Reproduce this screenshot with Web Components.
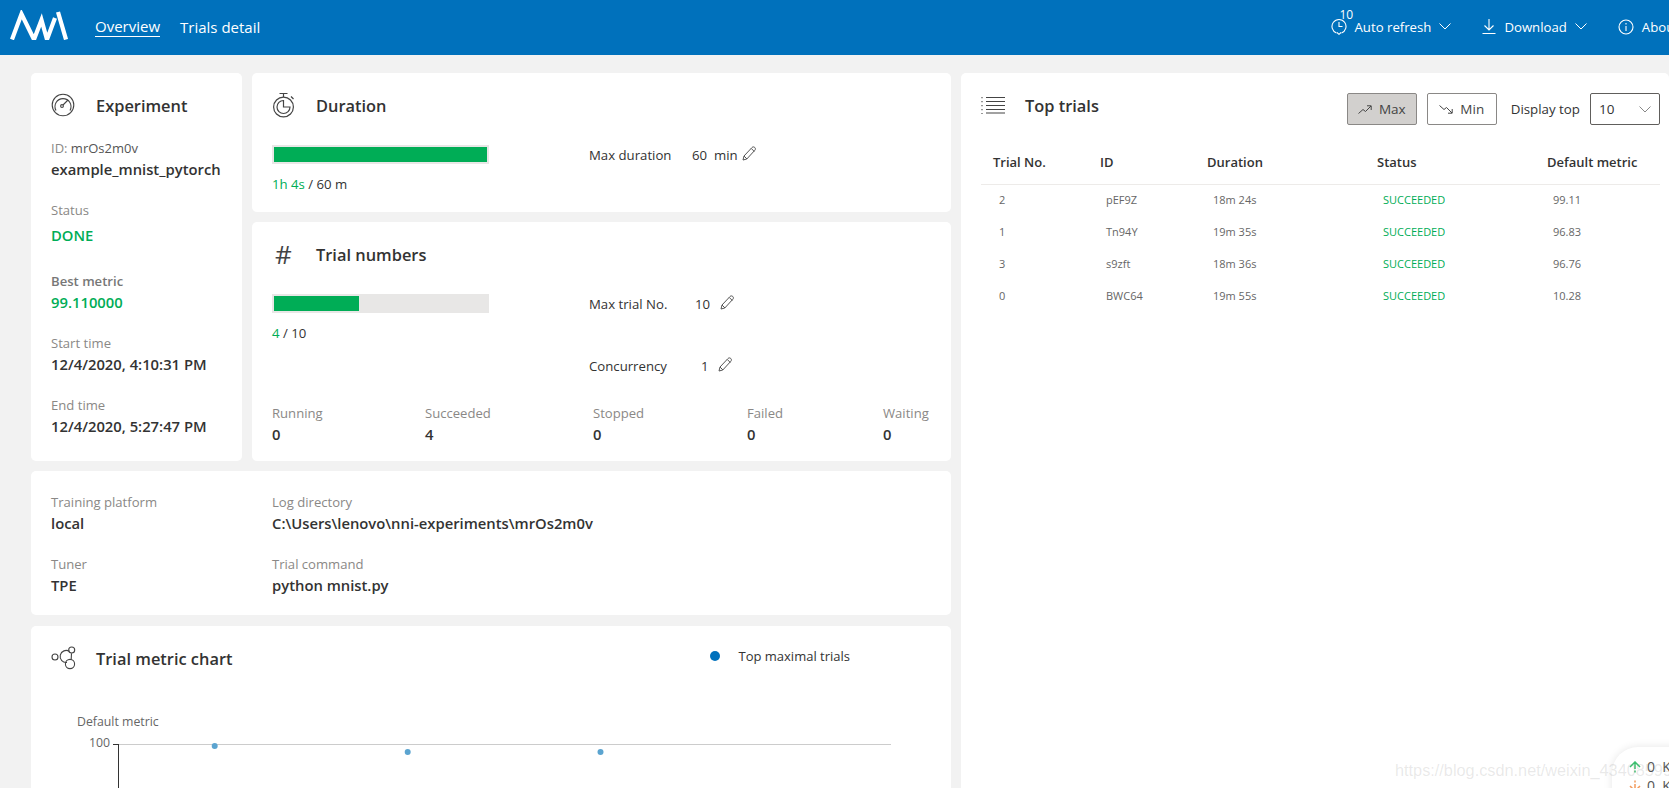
<!DOCTYPE html>
<html>
<head>
<meta charset="utf-8">
<title>NNI</title>
<style>
  html, body { margin: 0; height: 100%; overflow: hidden; }
  body {
    background: #f2f2f2;
    color: #333;
    font-family: "Open Sans", "Noto Sans", sans-serif;
    font-size: 13px;
  }
</style>
</head>
<body>
<nni-app></nni-app>

<script>
const ICONS = {
    gauge: '<svg width="24" height="24" viewBox="0 0 24 24" fill="none" stroke="currentColor" stroke-width="1.1"><circle cx="12" cy="12" r="10.8"/><path d="M5 17.5A8 8 0 1 1 19 17.5"/><circle cx="11" cy="13" r="1.4"/><path d="M12 12l5-5"/></svg>',
    watch: '<svg width="24" height="26" viewBox="0 0 24 26" fill="none" stroke="currentColor" stroke-width="1.2"><path d="M7.500 1.500h8M11.500 1.500v3.500M19 4.500l2.500 2.500"/><circle cx="11.500" cy="15" r="9.900"/><path d="M11.500 8.500a6.500 6.500 0 1 0 6.500 6.500h-6.500z"/></svg>',
    bubbles: '<svg width="26" height="26" viewBox="0 0 26 26" fill="none" stroke="currentColor" stroke-width="1.1"><circle cx="4" cy="12" r="3"/><circle cx="20.700" cy="5" r="3"/><circle cx="19" cy="19" r="4.600"/><path d="M18.500 6.500A6 6 0 1 0 16 17.400M20.500 8.200L20.200 14.500"/></svg>',
    list: '<svg width="24" height="18" viewBox="0 0 24 18" fill="none" stroke="currentColor" stroke-width="1.1"><path d="M5 1.500h19M5 5.500h19M5 9.500h19M5 13.500h19M5 17h19"/><path stroke-dasharray="1.300 2.700" d="M1 1v17"/></svg>',
    pencil: '<svg width="15" height="15" viewBox="0 0 15 15" fill="none" stroke="currentColor" stroke-width="1"><path d="M1 14l1-4 8-8.500c.8-.8 2-.8 2.800 0s.8 2 0 2.800L4.800 13z"/><path d="M2 10l3 3M9.300 2.500l3 3"/></svg>',
    clock: '<svg width="16" height="17" viewBox="0 0 16 17" fill="none" stroke="currentColor" stroke-width="1.1"><path d="M5.500 15A7 7 0 1 1 10.500 15"/><path d="M8 4v4.500h3.500M6 14.500l2 1.800 2-1.800"/></svg>',
    down: '<svg width="14" height="17" viewBox="0 0 14 17" fill="none" stroke="currentColor" stroke-width="1.1"><path d="M7 1v11M2.500 7.500L7 12l4.500-4.500M.5 15.500h13"/></svg>',
    info: '<svg width="16" height="16" viewBox="0 0 16 16" fill="none" stroke="currentColor" stroke-width="1.1"><circle cx="8" cy="8" r="7"/><path d="M8 7v5M8 4v1.400"/></svg>',
    chevron: '<svg width="12" height="7" viewBox="0 0 12 7" fill="none" stroke="currentColor" stroke-width="1"><path d="M.5.500L6 6l5.500-5.500"/></svg>',
    up: '<svg width="14" height="9" viewBox="0 0 14 9" fill="none" stroke="currentColor" stroke-width="1"><path d="M.5 8.500l4.500-4 2.500 2L13 1M9 .8h4.200V5"/></svg>',
    dn: '<svg width="14" height="9" viewBox="0 0 14 9" fill="none" stroke="currentColor" stroke-width="1"><path d="M.5.500l4.500 4 2.500-2L13 8M9 8.200h4.200V4"/></svg>'
};

class NniNav extends HTMLElement {
    constructor() {
        super();
        this.attachShadow({ mode: 'open' });
        this.shadowRoot.innerHTML = `
          <style>
            :host { display: flex; align-items: center; height: 55px; box-sizing: border-box; padding-bottom: 2px; background: #0071bc; color: #fff; font-size: 14px; flex: none; overflow: hidden; }
            .logo { margin: 10px 0 0 10px; width: 58px; height: 30px; flex: none; align-self: flex-start; }
            .tab { margin-left: 27px; font-size: 15px; line-height: 20px; }
            .tab + .tab { margin-left: 20px; }
            .on { border-bottom: 1px solid #fff; }
            .tools { margin-left: auto; display: flex; align-items: center; white-space: nowrap; margin-right: -10px; }
            .tool { display: flex; align-items: center; gap: 8px; margin-left: 31px; position: relative; font-size: 13.200px; }
            .tool .chev { display: flex; }
            .num { position: absolute; left: 9px; top: -10px; font-size: 12px; line-height: 14px; }
          </style>
          <svg class="logo" viewBox="0 0 58 30" fill="none" stroke="#fff" stroke-width="4.200"><path d="M2 29.500L11.500 4 24 29.500 31.500 10 37 29.500 45 8"/><path d="M48 2l8 27.500"/></svg>
          <span class="tab on">Overview</span>
          <span class="tab">Trials detail</span>
          <div class="tools">
            <div class="tool">${ICONS.clock}<span class="num">10</span><span>Auto refresh</span><span class="chev">${ICONS.chevron}</span></div>
            <div class="tool">${ICONS.down}<span>Download</span><span class="chev">${ICONS.chevron}</span></div>
            <div class="tool">${ICONS.info}<span>About</span></div>
          </div>
        `;
    }
}
customElements.define('nni-nav', NniNav);

// white rounded box everything on the page sits in
class NniCard extends HTMLElement {
    constructor() {
        super();
        this.attachShadow({ mode: 'open' });
        this.shadowRoot.innerHTML = `
          <style>
            :host { display: block; background: #fff; border-radius: 5px; box-sizing: border-box; min-width: 0; }
          </style>
          <slot></slot>
        `;
    }
}
customElements.define('nni-card', NniCard);

class NniTitle extends HTMLElement {
    constructor() {
        super();
        const icon = this.getAttribute('icon');
        this.attachShadow({ mode: 'open' });
        this.shadowRoot.innerHTML = `
          <style>
            :host { display: flex; align-items: center; height: 26px; color: #333; }
            .i { width: var(--iw, 44px); flex: none; display: flex; color: #444; }
            .t { font-size: 16.400px; font-weight: 600; white-space: nowrap; }
          </style>
          <span class="i">${icon === 'hash' ? '<span style="font-size:26px;line-height:26px;margin-left:3px">#</span>' : ICONS[icon]}</span>
          <span class="t"><slot></slot></span>
        `;
    }
}
customElements.define('nni-title', NniTitle);

class NniField extends HTMLElement {
    constructor() {
        super();
        this.attachShadow({ mode: 'open' });
        this.shadowRoot.innerHTML = `
          <style>
            :host { display: block; }
            .l { color: #8a8886; font-size: 13.100px; line-height: 18px; white-space: nowrap; }
            .v { font-size: 14.800px; font-weight: 600; line-height: 24px; color: var(--val, #333); white-space: nowrap; margin-top: var(--vm, 0); }
          </style>
          <div class="l">${this.getAttribute('label')}</div>
          <div class="v"><slot></slot></div>
        `;
    }
}
customElements.define('nni-field', NniField);

class NniBar extends HTMLElement {
    constructor() {
        super();
        this.attachShadow({ mode: 'open' });
        this.shadowRoot.innerHTML = `
          <style>
            :host { display: block; width: 217px; height: 19px; box-sizing: border-box; background: #e8e7e6; border: 2px solid #e8e7e6; }
            div { height: 100%; background: #00ad56; width: ${this.getAttribute('pct')}%; }
          </style>
          <div></div>
        `;
    }
}
customElements.define('nni-bar', NniBar);

class NniLimit extends HTMLElement {
    constructor() {
        super();
        this.attachShadow({ mode: 'open' });
        this.shadowRoot.innerHTML = `
          <style>
            :host { display: flex; align-items: center; height: 19px; font-size: 13.200px; white-space: nowrap; color: #333; }
            .l { width: var(--lw, 106px); }
            svg { margin-left: var(--pm, 10px); color: #555; position: relative; top: -1px; }
          </style>
          <span class="l">${this.getAttribute('label')}</span>
          <span><slot></slot></span>
          ${ICONS.pencil}
        `;
    }
}
customElements.define('nni-limit', NniLimit);

class NniExperiment extends HTMLElement {
    constructor() {
        super();
        this.attachShadow({ mode: 'open' });
        this.shadowRoot.innerHTML = `
          <style>
            :host { display: flex; flex-direction: column; padding: 19px 20px; box-sizing: border-box; height: 100%; --iw: 45px; }
            .id { margin-top: 21px; font-size: 13px; line-height: 18px; color: #555; white-space: nowrap; }
            .id span { color: #8a8886; }
            .name { font-size: 14.800px; font-weight: 600; line-height: 24px; white-space: nowrap; }
            .done { --val: #00ad56; }
            .gap { margin-top: 25px; }
            .low { margin-top: 20px; }
          </style>
          <nni-title icon="gauge">Experiment</nni-title>
          <div class="id"><span>ID:</span> mrOs2m0v</div>
          <div class="name">example_mnist_pytorch</div>
          <nni-field class="done" label="Status" style="margin-top:20px;--vm:4px">DONE</nni-field>
          <nni-field class="done gap" label="<b style='font-weight:600;color:#777'>Best metric</b>">99.110000</nni-field>
          <nni-field class="low" label="Start time">12/4/2020, 4:10:31 PM</nni-field>
          <nni-field class="low" label="End time">12/4/2020, 5:27:47 PM</nni-field>
        `;
    }
}
customElements.define('nni-experiment', NniExperiment);

class NniDuration extends HTMLElement {
    constructor() {
        super();
        this.attachShadow({ mode: 'open' });
        this.shadowRoot.innerHTML = `
          <style>
            :host { display: block; padding: 19px 20px; height: 100%; box-sizing: border-box; font-size: 13.200px; }
            .row { display: flex; margin-top: 27px; }
            .left { width: 317px; flex: none; }
            .txt { margin-top: 11px; line-height: 18px; }
            .g { color: #00ad56; }
          </style>
          <nni-title icon="watch">Duration</nni-title>
          <div class="row">
            <div class="left">
              <nni-bar pct="100"></nni-bar>
              <div class="txt"><span class="g">1h 4s</span> / 60 m</div>
            </div>
            <nni-limit label="Max duration" style="--lw:103px;--pm:4px">60&nbsp; min</nni-limit>
          </div>
        `;
    }
}
customElements.define('nni-duration', NniDuration);

class NniTrialNumbers extends HTMLElement {
    constructor() {
        super();
        this.attachShadow({ mode: 'open' });
        this.shadowRoot.innerHTML = `
          <style>
            :host { display: block; padding: 19px 20px; height: 100%; box-sizing: border-box; font-size: 13.200px; }
            .row { display: flex; margin-top: 27px; }
            .left { width: 317px; flex: none; }
            .txt { margin-top: 11px; line-height: 18px; }
            .g { color: #00ad56; }
            .lims { display: flex; flex-direction: column; gap: 43px; }
            .counts { display: grid; grid-template-columns: 153px 168px 154px 136px auto; margin-top: 29px; }
          </style>
          <nni-title icon="hash">Trial numbers</nni-title>
          <div class="row">
            <div class="left">
              <nni-bar pct="40"></nni-bar>
              <div class="txt"><span class="g">4</span> / 10</div>
            </div>
            <div class="lims">
              <nni-limit label="Max trial No.">10</nni-limit>
              <nni-limit label="Concurrency" style="--lw:112px;--pm:9px">1</nni-limit>
            </div>
          </div>
          <div class="counts">
            <nni-field label="Running">0</nni-field>
            <nni-field label="Succeeded">4</nni-field>
            <nni-field label="Stopped">0</nni-field>
            <nni-field label="Failed">0</nni-field>
            <nni-field label="Waiting">0</nni-field>
          </div>
        `;
    }
}
customElements.define('nni-trial-numbers', NniTrialNumbers);

class NniInfo extends HTMLElement {
    constructor() {
        super();
        this.attachShadow({ mode: 'open' });
        this.shadowRoot.innerHTML = `
          <style>
            :host { display: grid; grid-template-columns: 221px 1fr; grid-auto-rows: 42px; row-gap: 20px; padding: 22px 20px 0; box-sizing: border-box; height: 100%; }
          </style>
          <nni-field label="Training platform">local</nni-field>
          <nni-field label="Log directory">C:\\Users\\lenovo\\nni-experiments\\mrOs2m0v</nni-field>
          <nni-field label="Tuner">TPE</nni-field>
          <nni-field label="Trial command">python mnist.py</nni-field>
        `;
    }
}
customElements.define('nni-info', NniInfo);

class NniChart extends HTMLElement {
    constructor() {
        super();
        this.attachShadow({ mode: 'open' });
        this.shadowRoot.innerHTML = `
          <style>
            :host { display: block; padding: 19px 20px 0; box-sizing: border-box; height: 100%; overflow: hidden; --iw: 45px; }
            .head { display: flex; align-items: center; }
            .legend { margin-left: auto; margin-right: 81px; display: flex; align-items: center; gap: 18px; font-size: 13px; white-space: nowrap; position: relative; top: -2px; }
            .dot { width: 10px; height: 10px; border-radius: 50%; background: #0071bc; }
            svg { display: block; margin-top: 8px; }
            text { font-family: "Open Sans", sans-serif; font-size: 12.300px; fill: #666; }
          </style>
          <div class="head">
            <nni-title icon="bubbles">Trial metric chart</nni-title>
            <div class="legend"><span class="dot"></span>Top maximal trials</div>
          </div>
          <svg width="880" height="120">
            <text x="26" y="47">Default metric</text>
            <text x="59" y="68" text-anchor="end">100</text>
            <path d="M67 65.500h773" stroke="#ccc"/>
            <path d="M62 65.500h6M67.500 65.500V120" stroke="#333" fill="none"/>
            <circle cx="163.700" cy="67" r="3" fill="#5ba4d0"/>
            <circle cx="356.700" cy="73" r="3" fill="#5ba4d0"/>
            <circle cx="549.500" cy="73" r="3" fill="#5ba4d0"/>
          </svg>
        `;
    }
}
customElements.define('nni-chart', NniChart);

class NniTopTrials extends HTMLElement {
    constructor() {
        super();
        const rows = [
            ['2', 'pEF9Z', '18m 24s', '99.11'],
            ['1', 'Tn94Y', '19m 35s', '96.83'],
            ['3', 's9zft', '18m 36s', '96.76'],
            ['0', 'BWC64', '19m 55s', '10.28']
        ];
        this.attachShadow({ mode: 'open' });
        this.shadowRoot.innerHTML = `
          <style>
            :host { display: block; padding: 19px 9px 0 20px; height: 100%; box-sizing: border-box; }
            .head { display: flex; align-items: flex-start; height: 32px; }
            .sp { flex: 1; }
            button { font: inherit; font-size: 13.500px; height: 32px; box-sizing: border-box; width: 70px; border: 1px solid #8a8886; border-radius: 2px; background: #fff; color: #444; display: flex; align-items: center; justify-content: center; gap: 7px; padding: 0; margin-left: 10px; }
            button.on { background: #d2d0ce; }
            .head-tools { display: flex; align-items: center; position: relative; top: 1px; }
            .lbl { margin: 0 10px 0 14px; font-size: 13.300px; color: #333; white-space: nowrap; }
            .sel { width: 70px; height: 32px; box-sizing: border-box; border: 1px solid #605e5c; border-radius: 2px; display: flex; align-items: center; justify-content: space-between; padding: 0 8px; font-size: 13.500px; }
            .sel svg { color: #888; }
            .t { margin-top: 16px; }
            .r { display: grid; grid-template-columns: 107px 107px 170px 170px 1fr; align-items: center; white-space: nowrap; }
            .hd { height: 45px; box-sizing: border-box; font-size: 13px; font-weight: 600; color: #333; border-bottom: 1px solid #edebe9; padding-left: 12px; margin-bottom: -2px; }
            .bd { height: 32px; font-size: 11px; color: #666; padding-left: 18px; }
            .ok { color: #00ad56; }
          </style>
          <div class="head">
            <nni-title icon="list">Top trials</nni-title>
            <div class="sp"></div>
            <div class="head-tools">
              <button class="on">${ICONS.up}Max</button>
              <button>${ICONS.dn}Min</button>
              <span class="lbl">Display top</span>
              <div class="sel"><span>10</span>${ICONS.chevron}</div>
            </div>
          </div>
          <div class="t">
            <div class="r hd"><span>Trial No.</span><span>ID</span><span>Duration</span><span>Status</span><span>Default metric</span></div>
            ${rows.map(r => `<div class="r bd"><span>${r[0]}</span><span>${r[1]}</span><span>${r[2]}</span><span class="ok">SUCCEEDED</span><span>${r[3]}</span></div>`).join('')}
          </div>
        `;
    }
}
customElements.define('nni-top-trials', NniTopTrials);

class NniApp extends HTMLElement {
    constructor() {
        super();
        this.attachShadow({ mode: 'open' });
        this.shadowRoot.innerHTML = `
          <style>
            :host { display: flex; flex-direction: column; height: 788px; overflow: hidden; position: relative; }
            main { display: grid; grid-template-columns: 920px 708px; column-gap: 10px; padding: 18px 0 0 31px; flex: 1; min-height: 0; width: 1669px; box-sizing: border-box; }
            .left { display: grid; grid-template-columns: 211px 699px; grid-template-rows: 139px 239px 144px 200px; gap: 10px; grid-template-areas: "e d" "e n" "i i" "c c"; }
            .chart { margin-top: 1px; }
            .right { height: 720px; }
            .wm { position: absolute; left: 1395px; top: 760px; font: 16.300px/20px "Liberation Sans", sans-serif; color: rgba(120,120,120,.17); white-space: nowrap; }
            .speed { position: absolute; left: 1612px; top: 747px; width: 100px; height: 70px; background: #fff; border-radius: 26px; box-shadow: 0 0 8px rgba(0,0,0,.1); font-size: 14px; color: #555; padding: 10px 0 0 17px; box-sizing: border-box; line-height: 19px; white-space: nowrap; }
            .speed svg { margin-right: 6px; vertical-align: -1px; }
          </style>
          <nni-nav></nni-nav>
          <main>
            <div class="left">
              <nni-card style="grid-area:e"><nni-experiment></nni-experiment></nni-card>
              <nni-card style="grid-area:d"><nni-duration></nni-duration></nni-card>
              <nni-card style="grid-area:n"><nni-trial-numbers></nni-trial-numbers></nni-card>
              <nni-card style="grid-area:i"><nni-info></nni-info></nni-card>
              <nni-card class="chart" style="grid-area:c"><nni-chart></nni-chart></nni-card>
            </div>
            <nni-card class="right"><nni-top-trials></nni-top-trials></nni-card>
          </main>
          <div class="speed"><svg width="12" height="12" viewBox="0 0 12 12" fill="none" stroke="#3cbf6e" stroke-width="1.500"><path d="M1 6l5-5 5 5M6 2v6M6 9.500v2"/></svg>0&nbsp; K<br><svg width="12" height="12" viewBox="0 0 12 12" fill="none" stroke="#f29a5c" stroke-width="1.500"><path d="M1 6l5 5 5-5M6 10V4M6 2.500v-2"/></svg>0&nbsp; K</div>
          <div class="wm">https://blog.csdn.net/weixin_43408599</div>
        `;
    }
}
customElements.define('nni-app', NniApp);
</script>
</body>
</html>
